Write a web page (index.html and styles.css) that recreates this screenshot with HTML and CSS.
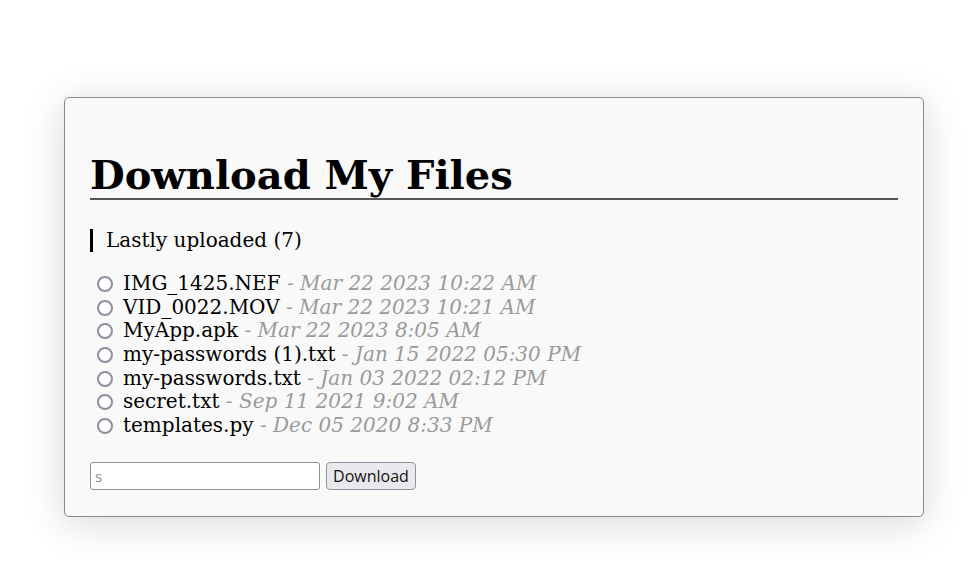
FILE: index.html
```html
<!DOCTYPE html>
<html lang="en">
<head>
<meta charset="utf-8">
<title>Download My Files</title>
<link rel="stylesheet" href="styles.css">
</head>
<body>
<main class="card">
  <h1 class="title">Download My Files</h1>
  <p class="subtitle">Lastly uploaded (7)</p>
  <form class="files">
    <ul class="file-list">
      <li><label><input type="radio" name="f" class="radio"><span class="name">IMG_1425.NEF</span> <span class="date">- Mar 22 2023 10:22 AM</span></label></li>
      <li><label><input type="radio" name="f" class="radio"><span class="name">VID_0022.MOV</span> <span class="date">- Mar 22 2023 10:21 AM</span></label></li>
      <li><label><input type="radio" name="f" class="radio"><span class="name">MyApp.apk</span> <span class="date">- Mar 22 2023 8:05 AM</span></label></li>
      <li><label><input type="radio" name="f" class="radio"><span class="name">my-passwords (1).txt</span> <span class="date">- Jan 15 2022 05:30 PM</span></label></li>
      <li><label><input type="radio" name="f" class="radio"><span class="name">my-passwords.txt</span> <span class="date">- Jan 03 2022 02:12 PM</span></label></li>
      <li><label><input type="radio" name="f" class="radio"><span class="name">secret.txt</span> <span class="date">- Sep 11 2021 9:02 AM</span></label></li>
      <li><label><input type="radio" name="f" class="radio"><span class="name">templates.py</span> <span class="date">- Dec 05 2020 8:33 PM</span></label></li>
    </ul>
    <div class="actions">
      <input type="text" class="field" placeholder="s">
      <button type="button" class="btn">Download</button>
    </div>
  </form>
</main>
</body>
</html>
```

FILE: styles.css
```css
html, body {
  margin: 0;
  padding: 0;
  background: #ffffff;
}
html {
  min-height: 100%;
}
body {
  font-family: "DejaVu Serif", serif;
  color: #000;
  padding: 97px 0 60px 0;
  min-height: 100vh;
  box-sizing: border-box;
}
.card {
  margin: 0 0 0 64px;
  width: 808px;
  padding: 0 25px 26px 25px;
  background: #f9f9f9;
  border: 1px solid #8a8a8a;
  border-radius: 5px;
  box-shadow: 0 6px 40px rgba(0, 0, 0, 0.16);
  box-sizing: content-box;
}
.title {
  font-family: "DejaVu Serif", serif;
  font-weight: bold;
  font-size: 40px;
  line-height: normal;
  margin: 0;
  padding-top: 53px;
  border-bottom: 2px solid #555;
}
.subtitle {
  margin: 29px 0 0 0;
  font-size: 20px;
  line-height: 23px;
  padding-left: 13px;
  border-left: 3px solid #000;
}
.files {
  margin: 0;
}
.file-list {
  list-style: none;
  margin: 20px 0 0 0;
  padding: 0;
  font-size: 20px;
  line-height: 23.67px;
}
.file-list li {
  display: block;
}
.radio {
  appearance: none;
  -webkit-appearance: none;
  box-sizing: border-box;
  width: 16px;
  height: 16px;
  border: 2px solid #8f8f9d;
  border-radius: 50%;
  background: #fff;
  margin: 0 10px 0 7px;
  vertical-align: -2px;
}
.date {
  font-style: italic;
  color: #9a9a9a;
}
.actions {
  display: flex;
  gap: 6px;
  margin-top: 24px;
}
.field {
  width: 230px;
  height: 28px;
  box-sizing: border-box;
  border: 1px solid #8f8f9d;
  border-radius: 3px;
  background: #fff;
  font-family: "Open Sans", "Noto Sans", sans-serif;
  font-size: 15px;
  padding: 0 4px;
}
.field::placeholder {
  color: #8a8a8a;
}
.btn {
  width: 90px;
  height: 28px;
  box-sizing: border-box;
  border: 1px solid #8f8f9d;
  border-radius: 4px;
  background: #e9e9ed;
  font-family: "Open Sans", "Noto Sans", sans-serif;
  font-size: 16px;
  color: #111;
  padding: 0;
}
```
